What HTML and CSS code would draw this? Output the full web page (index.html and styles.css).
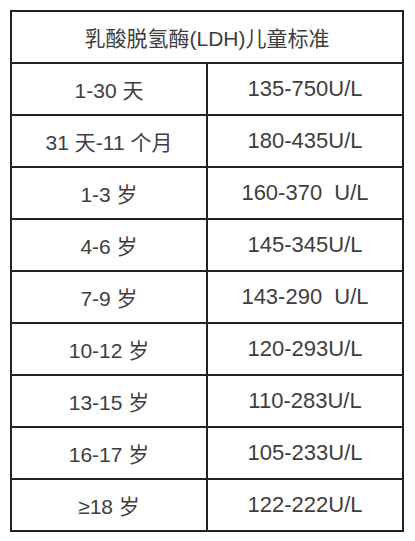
FILE: index.html
```html
<!DOCTYPE html>
<html lang="zh">
<head>
<meta charset="utf-8">
<link rel="stylesheet" href="styles.css">
</head>
<body>
<table class="ldh">
  <thead>
    <tr><th colspan="2" class="title">乳酸脱氢酶(LDH)儿童标准</th></tr>
  </thead>
  <tbody>
    <tr><td class="age">1-30 天</td><td class="val">135-750U/L</td></tr>
    <tr><td class="age">31 天-11 个月</td><td class="val">180-435U/L</td></tr>
    <tr><td class="age">1-3 岁</td><td class="val">160-370&nbsp; U/L</td></tr>
    <tr><td class="age">4-6 岁</td><td class="val">145-345U/L</td></tr>
    <tr><td class="age">7-9 岁</td><td class="val">143-290&nbsp; U/L</td></tr>
    <tr><td class="age">10-12 岁</td><td class="val">120-293U/L</td></tr>
    <tr><td class="age">13-15 岁</td><td class="val">110-283U/L</td></tr>
    <tr><td class="age">16-17 岁</td><td class="val">105-233U/L</td></tr>
    <tr><td class="age">≥18 岁</td><td class="val">122-222U/L</td></tr>
  </tbody>
</table>
</body>
</html>
```
FILE: styles.css
```css
html, body {
  margin: 0;
  padding: 0;
  background: #ffffff;
}
body {
  padding: 10px 0 0 10px;
}
.ldh {
  border-collapse: collapse;
  width: 394px;
  table-layout: fixed;
  font-family: "Liberation Sans", "Noto Sans CJK SC", sans-serif;
  color: #3e3e3e;
}
.ldh th, .ldh td {
  border: 2px solid #222222;
  height: 50px;
  padding: 0;
  text-align: center;
  vertical-align: middle;
  font-weight: normal;
  white-space: nowrap;
}
.title {
  font-size: 21px;
}
.age {
  font-size: 21px;
}
.val {
  font-size: 22px;
}
```
